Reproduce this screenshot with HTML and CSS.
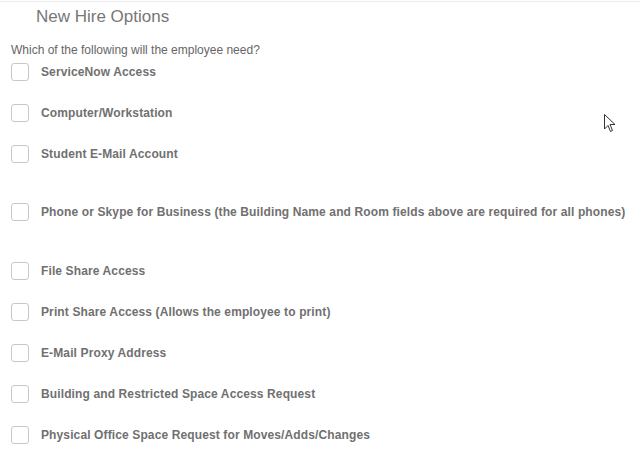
FILE: index.html
```html
<!doctype html>
<html lang="en">
<head>
    <meta charset="UTF-8">
    <title>New Hire Options</title>
    <link rel="stylesheet" href="styles.css">
</head>
<body>
<div id="section">
    <div id="section-title">New Hire Options</div>

    <div id="section-body">
        <div id="question">Which of the following will the employee need?</div>

        <div class="option"><span class="box"></span><span>ServiceNow Access</span></div>
        <div class="option"><span class="box"></span><span>Computer/Workstation</span></div>
        <div class="option"><span class="box"></span><span>Student E-Mail Account</span></div>
        <div class="option option-wide"><span class="box"></span><span>Phone or Skype for Business (the Building Name and Room fields above are required for all phones)</span></div>
        <div class="option"><span class="box"></span><span>File Share Access</span></div>
        <div class="option"><span class="box"></span><span>Print Share Access (Allows the employee to print)</span></div>
        <div class="option"><span class="box"></span><span>E-Mail Proxy Address</span></div>
        <div class="option"><span class="box"></span><span>Building and Restricted Space Access Request</span></div>
        <div class="option"><span class="box"></span><span>Physical Office Space Request for Moves/Adds/Changes</span></div>
    </div>
</div>

<svg class="cursor" width="12" height="19" viewBox="0 0 12 19">
    <path d="M0.5 0.5 L0.5 15 L4 11.5 L6.5 17.5 L8.5 16.5 L6 10.5 L11 10.5 Z" fill="#fff" stroke="#333" stroke-width="1"/>
</svg>
</body>
</html>
```

FILE: styles.css
```css
body {
    margin: 0;
    background-color: #fff;
    font-family: "Liberation Sans", Arial, sans-serif;
    color: #666;
}

#section {
    border-top: 1px solid #ececec;
    margin-top: 1px;
}

#section-title {
    padding: 4px 0 0 36px;
    font-size: 17px;
    line-height: 22px;
    color: #777;
}

#section-body {
    padding: 0 11px;
}

#question {
    margin-top: 15px;
    font-size: 12px;
    line-height: 14px;
    color: #666;
}

.option {
    display: flex;
    align-items: center;
    height: 18px;
    margin-top: 23px;
    font-size: 12px;
    font-weight: bold;
    letter-spacing: 0.12px;
    color: #707070;
}

#question + .option {
    margin-top: 6px;
}

.option-wide {
    margin: 40px 0 41px;
}

.option-wide + .option {
    margin-top: 0;
}

.box {
    width: 16px;
    height: 16px;
    border: 1px solid #c8c8c8;
    border-radius: 3px;
    margin-right: 12px;
    flex: none;
}

.cursor {
    position: absolute;
    left: 604px;
    top: 114px;
}
```
